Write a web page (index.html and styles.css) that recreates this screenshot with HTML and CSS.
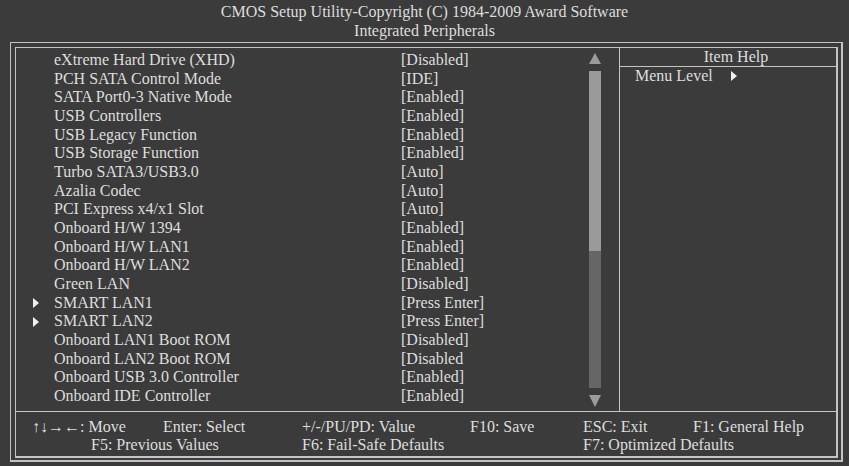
FILE: index.html
```html
<!DOCTYPE html>
<html>
<head>
<meta charset="utf-8">
<link rel="stylesheet" href="styles.css">
</head>
<body>
<div class="screen">
  <header class="title">
    <div>CMOS Setup Utility-Copyright (C) 1984-2009 Award Software</div>
    <div>Integrated Peripherals</div>
  </header>
  <div class="frame-outer">
    <div class="frame-inner">
      <div class="main">
        <div class="list-panel">
          <div class="rows">
            <span class="mk"></span><span>eXtreme Hard Drive (XHD)</span><span>[Disabled]</span>
            <span class="mk"></span><span>PCH SATA Control Mode</span><span>[IDE]</span>
            <span class="mk"></span><span>SATA Port0-3 Native Mode</span><span>[Enabled]</span>
            <span class="mk"></span><span>USB Controllers</span><span>[Enabled]</span>
            <span class="mk"></span><span>USB Legacy Function</span><span>[Enabled]</span>
            <span class="mk"></span><span>USB Storage Function</span><span>[Enabled]</span>
            <span class="mk"></span><span>Turbo SATA3/USB3.0</span><span>[Auto]</span>
            <span class="mk"></span><span>Azalia Codec</span><span>[Auto]</span>
            <span class="mk"></span><span>PCI Express x4/x1 Slot</span><span>[Auto]</span>
            <span class="mk"></span><span>Onboard H/W 1394</span><span>[Enabled]</span>
            <span class="mk"></span><span>Onboard H/W LAN1</span><span>[Enabled]</span>
            <span class="mk"></span><span>Onboard H/W LAN2</span><span>[Enabled]</span>
            <span class="mk"></span><span>Green LAN</span><span>[Disabled]</span>
            <span class="mk"><i class="tri"></i></span><span>SMART LAN1</span><span>[Press Enter]</span>
            <span class="mk"><i class="tri"></i></span><span>SMART LAN2</span><span>[Press Enter]</span>
            <span class="mk"></span><span>Onboard LAN1 Boot ROM</span><span>[Disabled]</span>
            <span class="mk"></span><span>Onboard LAN2 Boot ROM</span><span>[Disabled</span>
            <span class="mk"></span><span>Onboard USB 3.0 Controller</span><span>[Enabled]</span>
            <span class="mk"></span><span>Onboard IDE Controller</span><span>[Enabled]</span>
          </div>
          <div class="scroll">
            <i class="arrow-up"></i>
            <div class="track">
              <div class="thumb"></div>
              <div class="rest"></div>
            </div>
            <i class="arrow-down"></i>
          </div>
        </div>
        <div class="help-panel">
          <div class="help-title">Item Help</div>
          <div class="help-body">Menu Level<i class="tri help-tri"></i></div>
        </div>
      </div>
      <div class="keys">
        <span class="k-move">↑↓→←: Move</span>
        <span class="k-enter">Enter: Select</span>
        <span class="k-value">+/-/PU/PD: Value</span>
        <span class="k-save">F10: Save</span>
        <span class="k-exit">ESC: Exit</span>
        <span class="k-f1">F1: General Help</span>
        <span class="k-f5">F5: Previous Values</span>
        <span class="k-f6">F6: Fail-Safe Defaults</span>
        <span class="k-f7">F7: Optimized Defaults</span>
      </div>
    </div>
  </div>
</div>
</body>
</html>
```

FILE: styles.css
```css
* { box-sizing: border-box; }
html, body {
  margin: 0;
  padding: 0;
  background: #3b3b3b;
}
body {
  width: 849px;
  height: 466px;
  overflow: hidden;
  font-family: "Liberation Serif", "Times New Roman", serif;
  font-size: 16px;
  color: #dedede;
}
.screen {
  display: flex;
  flex-direction: column;
}
.title {
  height: 42px;
  padding-top: 3px;
  text-align: center;
  line-height: 18.5px;
}
.frame-outer {
  margin-left: 10px;
  width: 833px;
  height: 420px;
  border-style: solid;
  border-color: #c4c4c4;
  border-width: 1px 2px 2px 1px;
  padding: 4px 3px 2px 4px;
}
.frame-inner {
  height: 100%;
  border-style: solid;
  border-color: #c4c4c4;
  border-width: 1px 2px 2px 1px;
  display: flex;
  flex-direction: column;
}
.main {
  height: 363px;
  display: flex;
  border-bottom: 1px solid #c4c4c4;
  box-sizing: content-box;
}
.list-panel {
  width: 604px;
  border-right: 1px solid #c4c4c4;
  display: flex;
}
.rows {
  flex: 1;
  display: grid;
  grid-template-columns: 21px 347px auto;
  grid-auto-rows: 18.67px;
  line-height: 18.67px;
  padding: 3px 0 0 17px;
  align-content: start;
}
.mk {
  display: flex;
  align-items: center;
}
.tri {
  display: block;
  width: 0;
  height: 0;
  border-top: 5px solid transparent;
  border-bottom: 5px solid transparent;
  border-left: 6px solid #f0f0f0;
}
.scroll {
  width: 12px;
  margin-right: 18px;
  padding: 5px 0 4px;
  display: flex;
  flex-direction: column;
  gap: 7px;
}
.arrow-up, .arrow-down {
  display: block;
  width: 0;
  height: 0;
  border-left: 6px solid transparent;
  border-right: 6px solid transparent;
}
.arrow-up { border-bottom: 11px solid #9c9c9e; }
.arrow-down { border-top: 12px solid #9c9c9e; }
.track {
  height: 317px;
  display: flex;
  flex-direction: column;
}
.thumb { height: 180px; background: #9a9a9d; }
.rest { flex: 1; background: #666667; }
.help-panel {
  flex: 1;
  display: flex;
  flex-direction: column;
}
.help-title {
  height: 19px;
  line-height: 18px;
  text-align: center;
  padding-left: 16px;
  border-bottom: 1px solid #c4c4c4;
}
.help-body {
  padding-left: 15px;
  line-height: 18.67px;
  display: flex;
  align-items: center;
}
.help-tri { margin-left: 18px; }
.keys {
  flex: 1;
  display: grid;
  grid-template-columns: 59px 72px 139px 168px 113px 110px auto;
  grid-template-rows: 18px 18px;
  line-height: 18px;
  padding: 6px 0 0 16px;
  white-space: nowrap;
}
.k-move { grid-area: 1 / 1 / 2 / 3; }
.k-enter { grid-area: 1 / 3; }
.k-value { grid-area: 1 / 4; }
.k-save { grid-area: 1 / 5; }
.k-exit { grid-area: 1 / 6; }
.k-f1 { grid-area: 1 / 7; }
.k-f5 { grid-area: 2 / 2 / 3 / 4; }
.k-f6 { grid-area: 2 / 4 / 3 / 6; }
.k-f7 { grid-area: 2 / 6 / 3 / 8; }
```
